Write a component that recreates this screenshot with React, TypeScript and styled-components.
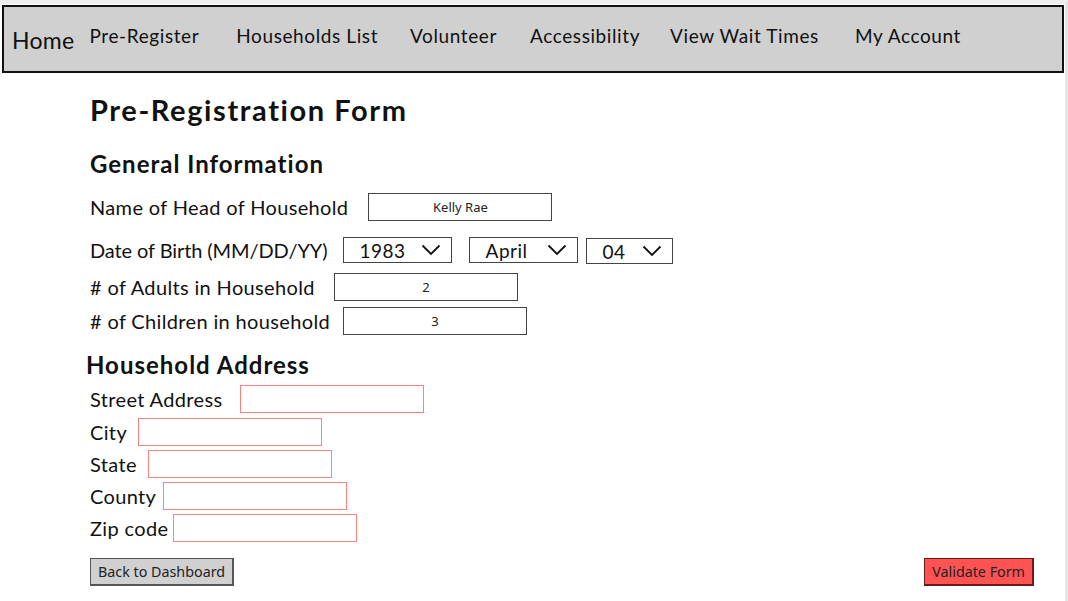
import React from "react";
import styled, { createGlobalStyle } from "styled-components";

const Global = createGlobalStyle`
  html, body { margin: 0; padding: 0; background: #ffffff; }
  body { font-family: "Lato", "Noto Sans", sans-serif; color: #111; }
  * { box-sizing: border-box; }
`;

const Page = styled.div`
  width: 1068px;
  height: 601px;
  overflow: hidden;
  background: #ffffff;
  border-top: 4px solid #efefef;
  border-right: 3px solid #e6e6e6;
  padding: 1px 1px 0 2px;
`;

const Nav = styled.nav`
  height: 68px;
  border: 2px solid #111;
  background: #d0d0d0;
  display: flex;
  align-items: flex-start;
  padding-left: 8px;
`;

const NavLink = styled.a<{ $ml: number; $home?: boolean }>`
  margin-left: ${(p) => p.$ml}px;
  font-size: ${(p) => (p.$home ? "23px" : "19px")};
  letter-spacing: ${(p) => (p.$home ? "0.3px" : "0.6px")};
  margin-top: ${(p) => (p.$home ? "19px" : "17px")};
  color: #111;
  text-decoration: none;
  white-space: nowrap;
`;

const Content = styled.main`
  padding-left: 88px;
  display: flex;
  flex-direction: column;
  align-items: flex-start;
`;

const Title = styled.h1`
  font-size: 29px;
  font-weight: 700;
  letter-spacing: 1.6px;
  margin: 19px 0 0 0;
  line-height: 36px;
`;

const Section = styled.h2<{ $mt: number; $ml?: number }>`
  font-size: 24px;
  font-weight: 700;
  letter-spacing: 1px;
  margin: ${(p) => p.$mt}px 0 0 ${(p) => p.$ml ?? 0}px;
  line-height: 30px;
`;

const Row = styled.div<{ $mt: number; $gap: number }>`
  display: flex;
  align-items: center;
  gap: ${(p) => p.$gap}px;
  margin-top: ${(p) => p.$mt}px;
`;

const Label = styled.label<{ $tight?: boolean }>`
  font-size: 20px;
  letter-spacing: ${(p) => (p.$tight ? "-0.1px" : "0.35px")};
  line-height: 26px;
  white-space: nowrap;
`;

const TextBox = styled.div<{ $invalid?: boolean }>`
  width: 184px;
  height: 28px;
  border: 1px solid ${(p) => (p.$invalid ? "#ff8080" : "#444")};
  background: #fff;
  display: flex;
  align-items: center;
  justify-content: center;
  font-family: "Noto Sans", sans-serif;
  font-size: 13px;
  color: #222;
`;

const Select = styled.div<{ $w: number; $mt?: number }>`
  width: ${(p) => p.$w}px;
  height: 26px;
  border: 1px solid #444;
  display: flex;
  align-items: center;
  justify-content: space-between;
  padding: 0 10px 0 16px;
  font-size: 19px;
  letter-spacing: 0.5px;
  margin-top: ${(p) => p.$mt ?? 0}px;
`;

const Actions = styled.div`
  display: flex;
  justify-content: space-between;
  width: 944px;
  margin-top: 16px;
`;

const Button = styled.button<{ $primary?: boolean }>`
  height: 28px;
  padding: 0 7px;
  font-family: "Noto Sans", sans-serif;
  font-size: 14.3px;
  color: #222;
  background: ${(p) => (p.$primary ? "#ff5252" : "#d0d0d0")};
  border: 1px solid ${(p) => (p.$primary ? "#6a1a1a" : "#555")};
  border-width: 1px 2px 2px 1px;
  cursor: pointer;
`;

const Chevron = () => (
  <svg width="20" height="12" viewBox="0 0 20 12" fill="none">
    <path d="M1.5 1.5 L10 10 L18.5 1.5" stroke="#111" strokeWidth="1.8" />
  </svg>
);

const navItems: { label: string; ml: number; home?: boolean }[] = [
  { label: "Home", ml: 0, home: true },
  { label: "Pre-Register", ml: 15 },
  { label: "Households List", ml: 37 },
  { label: "Volunteer", ml: 32 },
  { label: "Accessibility", ml: 33 },
  { label: "View Wait Times", ml: 30 },
  { label: "My Account", ml: 36 },
];

export default function App() {
  return (
    <>
      <Global />
      <Page>
        <Nav>
          {navItems.map((n) => (
            <NavLink key={n.label} href="#" $ml={n.ml} $home={n.home}>
              {n.label}
            </NavLink>
          ))}
        </Nav>
        <Content>
          <Title>Pre-Registration Form</Title>
          <Section $mt={21}>General Information</Section>
          <Row $mt={14} $gap={20}>
            <Label>Name of Head of Household</Label>
            <TextBox>Kelly Rae</TextBox>
          </Row>
          <Row $mt={15} $gap={15}>
            <Label $tight>Date of Birth (MM/DD/YY)</Label>
            <Row $mt={0} $gap={17}>
              <Select $w={109}>
                1983 <Chevron />
              </Select>
              <Row $mt={0} $gap={8}>
                <Select $w={109}>
                  April <Chevron />
                </Select>
                <Select $w={87} $mt={2}>
                  04 <Chevron />
                </Select>
              </Row>
            </Row>
          </Row>
          <Row $mt={9} $gap={19}>
            <Label># of Adults in Household</Label>
            <TextBox>2</TextBox>
          </Row>
          <Row $mt={6} $gap={13}>
            <Label># of Children in household</Label>
            <TextBox>3</TextBox>
          </Row>
          <Section $mt={15} $ml={-4}>Household Address</Section>
          <Row $mt={5} $gap={18}>
            <Label>Street Address</Label>
            <TextBox $invalid />
          </Row>
          <Row $mt={5} $gap={11}>
            <Label>City</Label>
            <TextBox $invalid />
          </Row>
          <Row $mt={4} $gap={11}>
            <Label>State</Label>
            <TextBox $invalid />
          </Row>
          <Row $mt={4} $gap={7}>
            <Label>County</Label>
            <TextBox $invalid />
          </Row>
          <Row $mt={4} $gap={5}>
            <Label>Zip code</Label>
            <TextBox $invalid />
          </Row>
          <Actions>
            <Button>Back to Dashboard</Button>
            <Button $primary>Validate Form</Button>
          </Actions>
        </Content>
      </Page>
    </>
  );
}
